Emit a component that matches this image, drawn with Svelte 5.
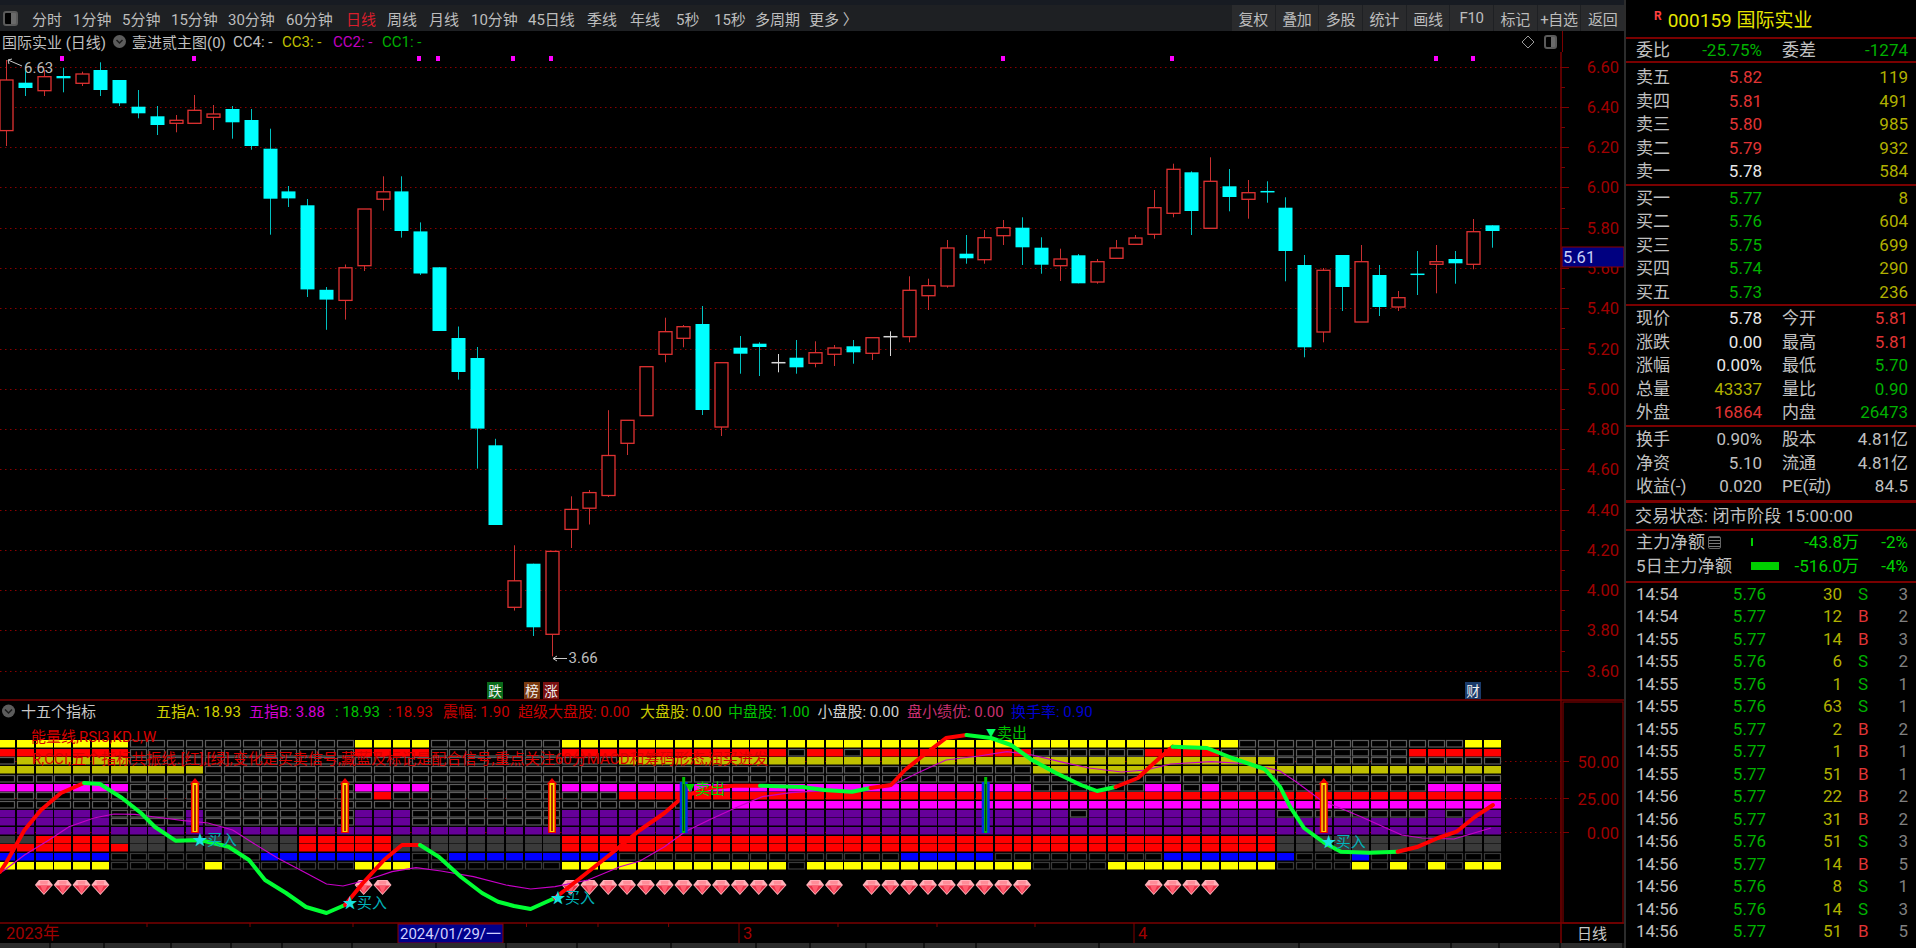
<script>
  const leftTabs = [['分时',41],['1分钟',49],['5分钟',49],['15分钟',57],['30分钟',58],['60分钟',60],['日线',41],['周线',42],['月线',42],['10分钟',57],['45日线',59],['季线',43],['年线',46],['5秒',38],['15秒',41],['多周期',54],['更多 〉',50]];
  const rightBtns = ['复权','叠加','多股','统计','画线','F10','标记','+自选','返回'];
  const cx = (i) => 6.3 + 18.81 * i;
  const priceY = (p) => 66.7 + (6.6 - p) * 201.33;
  const majors = Array.from({ length: 16 }, (_, k) => 6.6 - 0.2 * k);
  const minors = Array.from({ length: 15 }, (_, k) => 6.5 - 0.2 * k);

  // type, wick top, body top, body bottom, wick bottom (page pixels)
  const candles = [
    ['r',60,80,130.6,146],['c',68,82.7,88,96],['r',70,76.7,90.7,96],['c',67.7,76,78.3,92.3],['r',71.7,74,83.3,86],
    ['c',62.3,70,90,96],['c',80,80,103.3,106],['c',90,106.7,113.3,118.3],['c',106,116.3,125,135],['r',115,120.3,123.3,132.3],
    ['r',95,110.3,123.3,123.3],['r',105,114,117.3,130],['c',106,109,122.3,138.7],['c',109,120,146,149.7],['c',128.7,148.7,198.7,234.7],
    ['c',186,191.4,198.4,207],['c',199,205.3,289.4,297],['c',287,289.8,299.6,329.8],['r',264.5,267.8,300.4,319.6],['r',209,209,265.7,271],
    ['r',176.3,191.8,199.2,210.6],['c',176.3,191.4,231,237.6],['c',222.4,231.4,273.5,275],['c',267.3,267.3,331,331],['c',326.5,338,372,379.6],
    ['c',347,358,428.6,468.6],['c',438.8,445.3,525,525],['r',545.3,580.8,607.3,610.6],['c',563.7,563.7,627.3,636],['r',551.4,551.4,634.3,656.3],
    ['r',496.3,509.4,529.4,548],['r',490,492.6,508.2,524.5],['r',410.2,455.5,495.5,497],['r',420.3,420.3,443.3,455],['r',366.7,366.7,415.7,415.7],
    ['r',317.7,331.7,354.3,362.3],['r',325,326.7,338.3,347.3],['c',306,324,410,415],['r',362.7,362.7,427,436],['c',336,347.7,353.7,373.7],
    ['c',342.3,343.7,347,376],['w',354,362.7,362.7,372.3],['c',340,357.7,367.3,373.7],['r',341.3,352.7,363.3,367.3],['r',345,348,354.3,366],
    ['c',340,346.3,352.3,363.7],['r',337.7,337.7,353.3,360],['w',331.3,336.7,336.7,356],['r',276.3,290.3,336.7,342.3],['r',278.7,285.7,295.7,310],
    ['r',240,248,286,287.7],['c',235,253.7,258.3,263.7],['r',230,237.7,259.7,263.7],['r',220,227.7,235.7,245],['c',217.3,227.7,247.3,265],
    ['c',237.3,247.7,264.7,273.7],['r',248.7,259,265.7,281],['c',254,255.3,283.3,283.3],['r',259,261.7,282,283.7],['r',240,248,258.3,258.3],
    ['r',235,238,244.3,244.3],['r',190,207.7,234.3,238.7],['r',163.7,169.3,213.3,217.3],['c',171.3,172.3,211,235],['r',157.3,181.3,228.3,228.3],
    ['c',169,186.3,197,211.3],['r',180,192.7,199.3,218.7],['c',181.3,191.7,191.7,202.7],['c',197.3,207.7,251,281.3],['c',255,265,347.3,357.3],
    ['r',268,270.3,332,342.3],['c',255,255,287,311],['r',245,261.7,322,322],['c',265,275,307,316],['r',291,297.7,307,311],
    ['c',251,274.3,274.3,295],['r',245,261.7,264.3,293.3],['c',251,259,263.3,283.7],['r',219,231.7,264.3,269.3],['c',225.3,225.3,231,247.7]
  ];
  const candleColor = { r: '#e03232', c: '#00ffff', w: '#d8d8d8' };
  const wickColor = { r: '#c83030', c: '#00c0c0', w: '#d8d8d8' };
  const dots = [62, 194, 419, 438, 513, 551, 1003, 1172, 1436, 1473];

  const expand = (s) => {
    const set = new Set();
    s.split(',').forEach((part) => {
      const [a, b] = part.split('-').map(Number);
      for (let i = a; i <= (b ?? a); i++) set.add(i);
    });
    return set;
  };
  const rowsDef = [
    ['#ffff00','0-6,19-22,30-65,78-79','#5c5c5c'],
    ['#ff0000','0-6,19-22,30-41,43-44,46-54,61-64,75-79','#5c5c5c'],
    ['#c0c000','1-6,33-67','#5c5c5c'],
    ['#c0c000','0-10,55-79','#5c5c5c'],
    ['#000','300','#5c5c5c'],
    ['#ff00ff','0-6,19-22,30-54,61-62,64,76-79','#5c5c5c'],
    ['#ff0000','20,33-79','#5c5c5c'],
    ['#ff00ff','39-79','#5c5c5c'],
    ['#660099','0-5,10,19-21,30-56,58-67,76,78-79','#5c5c5c'],
    ['#660099','0-5,10,19-21,30-79','#5c5c5c'],
    ['#660099','0-79','#5c5c5c'],
    ['#ff0000','2-5,16-20,30-67','#3a3a3a'],
    ['#ff0000','0-6,16-20,30-67','#3a3a3a'],
    ['#0000ff','0-5,14-21,24-32,48-52,62-68,72','#3a3a3a'],
    ['#ffff00','0-5,11,19-21,30-41,43-54,59-67,72,74,76,78-79','#3a3a3a']
  ];
  const cells = [];
  rowsDef.forEach(([color, ranges, empty], r) => {
    const filled = expand(ranges);
    const y = Math.round(740 + 8.7 * r);
    for (let i = 0; i < 80; i++) {
      cells.push({ x: Math.round(cx(i) - 8.3), y, fill: filled.has(i) ? color : null, empty, solid: r === 11 || r === 12 });
    }
  });

  const toPts = (a) => a.map((p) => p.join(',')).join(' ');
  const redGreen = [
    ['#ff0000',[[0,872],[6,863],[24.5,830],[41,810],[61,793],[84,783]]],
    ['#00ff33',[[84,783],[100,784],[122,798],[141,813],[155,827],[175.5,840.7],[200,840],[228.6,846.7],[249,860],[265,880],[286,893],[306,907],[326.5,913],[345,905]]],
    ['#ff0000',[[345,905],[363,883],[384,860],[402,845],[420,845]]],
    ['#00ff33',[[420,845],[439,857],[461,877],[482,893],[498,901.7],[514,906],[530.6,909],[555,898]]],
    ['#ff0000',[[555,898],[612,853],[640,830],[664.5,813],[683,796.7],[709,788],[734,785.7],[760,785.7]]],
    ['#00ff33',[[760,785.7],[803,787],[824,790],[852,791.7],[870.6,788]]],
    ['#ff0000',[[870.6,788],[891,785],[905,770],[921.6,756.7],[946,738],[966.5,735]]],
    ['#00ff33',[[966.5,735],[991,738],[1011,745],[1032,760],[1056,773],[1081,785],[1097,791],[1115.5,787]]],
    ['#ff0000',[[1115.5,787],[1138,778],[1154,763],[1172.6,746.7]]],
    ['#00ff33',[[1172.6,746.7],[1207,748],[1232,758],[1264.5,769],[1280,786.7],[1290,806.7],[1304,828],[1324.6,843],[1341,851.7],[1369,852.7],[1397.6,851.7]]],
    ['#ff0000',[[1397.6,851.7],[1418,846.7],[1438,838],[1456.5,831.7],[1475,816.7],[1493,805]]]
  ];
  const thin = [[0,873],[6,869],[24.5,855],[49,840],[69,826.7],[94,818],[114,814],[135,814.3],[155,817],[184,820.7],[208,823],[232.6,830],[253,843],[277.5,858],[306,873],[326.5,884],[343,886],[367,880],[392,871.7],[416,867.7],[441,871],[473.5,876.7],[506,885],[530.6,889],[555,886.7],[588,880],[620,866.7],[640,861],[664.5,846.7],[685,831.7],[709,820],[738,806.7],[762.4,796.7],[791,792.7],[824,790.7],[852,790.7],[889,787],[917.6,773],[946,760],[979,756],[1007,751.7],[1032,755],[1060,761.7],[1089,768],[1121.6,772],[1146,770],[1170.6,764],[1211.4,761.7],[1252,764],[1280,771],[1296,781.7],[1320.6,800],[1361,816.7],[1401.7,835],[1422,838],[1454,839],[1491,828]];

  const gems = [...expand('2-5,19-20,30-41,43-44,46-54,61-64')];
  const buyArrows = [195, 345, 552, 1323.8];
  const sellBars = [683.7, 985.7];
  const buySignals = [[200,845],[350,908],[558,903],[1328.7,847]];
  const badges = [
    { x: 487, t: '跌', bg: '#0a6a1a' }, { x: 524, t: '榜', bg: '#7a3a10' },
    { x: 543, t: '涨', bg: '#7a1010' }, { x: 1465, t: '财', bg: '#1a3a6a' }
  ];
  const heads = [
    { x: 156, t: '五指A: 18.93', c: '#d0d000' }, { x: 249, t: '五指B: 3.88', c: '#d000d0' },
    { x: 335, t: ': 18.93', c: '#00c000' }, { x: 388, t: ': 18.93', c: '#c80000' },
    { x: 443, t: '震幅: 1.90', c: '#c80000' }, { x: 518, t: '超级大盘股: 0.00', c: '#c80000' },
    { x: 640, t: '大盘股: 0.00', c: '#c8c800' }, { x: 728, t: '中盘股: 1.00', c: '#00c000' },
    { x: 817.5, t: '小盘股: 0.00', c: '#d0d0d0' }, { x: 907, t: '盘小绩优: 0.00', c: '#c83070' },
    { x: 1011, t: '换手率: 0.90', c: '#0000d0' }
  ];
  const smallTicks = [147, 250, 353, 526.5, 598, 668.6, 838, 937, 1035];
  const tabEdges = [51, 105, 172, 232, 283, 353, 437, 507, 578, 672, 757, 811, 867, 925, 977, 1100, 1300, 1452, 1500, 1561, 1624];

  const sells = [['卖五','5.82','119','red'],['卖四','5.81','491','red'],['卖三','5.80','985','red'],['卖二','5.79','932','red'],['卖一','5.78','584','white']];
  const buys = [['买一','5.77','8'],['买二','5.76','604'],['买三','5.75','699'],['买四','5.74','290'],['买五','5.73','236']];
  const stats = [
    ['现价','5.78','white','今开','5.81','red'],['涨跌','0.00','white','最高','5.81','red'],
    ['涨幅','0.00%','white','最低','5.70','green'],['总量','43337','olive','量比','0.90','green'],
    ['外盘','16864','red','内盘','26473','green']
  ];
  const fin = [['换手','0.90%','股本','4.81亿'],['净资','5.10','流通','4.81亿'],['收益(-)','0.020','PE(动)','84.5']];
  const trades = [
    ['14:54','5.76','30','S','3'],['14:54','5.77','12','B','2'],['14:55','5.77','14','B','3'],['14:55','5.76','6','S','2'],
    ['14:55','5.76','1','S','1'],['14:55','5.76','63','S','1'],['14:55','5.77','2','B','2'],['14:55','5.77','1','B','1'],
    ['14:55','5.77','51','B','1'],['14:56','5.77','22','B','2'],['14:56','5.77','31','B','2'],['14:56','5.76','51','S','3'],
    ['14:56','5.77','14','B','5'],['14:56','5.76','8','S','1'],['14:56','5.76','14','S','3'],['14:56','5.77','51','B','5']
  ];
</script>

<div class="app">
  <div class="left">
    <div class="toolbar">
      <div class="tabs">
        <span class="panel-icon"></span>
        {#each leftTabs as [t, w]}
          <span class="tab" class:active={t === '日线'} style="width: {w}px">{t}</span>
        {/each}
      </div>
      <div class="btns">
        {#each rightBtns as b}<span class="btn">{b}</span>{/each}
      </div>
    </div>
    <div class="titlebar">
      <span class="stock">国际实业 (日线)</span>
      <span class="chev"><svg width="13" height="13" viewBox="0 0 13 13"><path d="M3.5 5 L6.5 8 L9.5 5" fill="none" stroke="#1a1a1a" stroke-width="1.5" /></svg></span>
      <span class="ind">壹进贰主图(0)</span>
      <span class="cc c4">CC4: -</span>
      <span class="cc y">CC3: -</span>
      <span class="cc m">CC2: -</span>
      <span class="cc g">CC1: -</span>
      <span class="spacer"></span>
      <svg class="diamond" width="14" height="14" viewBox="0 0 14 14"><path d="M7 1 L13 7 L7 13 L1 7 Z" fill="none" stroke="#9a9a9a" /></svg>
      <span class="panel-icon small"></span>
      <span class="axis-stub"></span>
    </div>

    <svg class="chart" viewBox="0 52 1624 891" width="1624" height="891">
      <defs>
        <g id="gem">
          <polygon points="4,0 14,0 18,5 9,15 0,5" fill="#ffb0b8" />
          <polygon points="1.5,5.5 16.5,5.5 9,13.5" fill="#e8344a" />
          <polygon points="5.5,5.5 12.5,5.5 9,14" fill="#ff5c70" />
          <polygon points="5,1 13,1 12.5,4.5 5.5,4.5" fill="#ff8c98" />
        </g>
      </defs>

      {#each majors as p}
        <line class="dotted" x1="0" x2="1561" y1={Math.round(priceY(p)) + 0.5} y2={Math.round(priceY(p)) + 0.5} />
        <line class="axis" x1="1561" x2="1569" y1={Math.round(priceY(p)) + 0.5} y2={Math.round(priceY(p)) + 0.5} />
        <text class="axis-label" x="1619" y={priceY(p) + 6} text-anchor="end">{p.toFixed(2)}</text>
      {/each}
      {#each minors as p}
        <line class="axis" x1="1561" x2="1565" y1={Math.round(priceY(p)) + 0.5} y2={Math.round(priceY(p)) + 0.5} />
      {/each}

      <rect x="1562" y="247" width="62" height="20" fill="#000080" stroke="#8b0000" />
      <text class="last" x="1563" y="262.5">5.61</text>

      {#each dots as x}<rect x={x - 2} y="56" width="4" height="5" fill="#ff00ff" />{/each}

      {#each candles as [t, wt, bt, bb, wb], i}
        {@const x = Math.round(cx(i)) + 0.5}
        <line x1={x} x2={x} y1={wt} y2={wb} stroke={wickColor[t]} stroke-width="1" />
        {#if bb - bt < 1}
          <line x1={x - 7} x2={x + 7} y1={bt} y2={bt} stroke={candleColor[t]} stroke-width="1.5" />
        {:else if t === 'c'}
          <rect x={x - 7} y={bt} width="14" height={bb - bt} fill="#00ffff" />
        {:else}
          <rect x={x - 6.5} y={bt} width="13" height={bb - bt} fill="#000" stroke={candleColor[t]} stroke-width="1.3" />
        {/if}
      {/each}

      <text class="note" x="24" y="73">6.63</text>
      <path class="arrow" d="M22 66 L8 60 M8 60 L12 59 M8 60 L9 64" />
      <text class="note" x="568.5" y="663">3.66</text>
      <path class="arrow" d="M567 658.5 L553 658.5 M553 658.5 L557 656 M553 658.5 L557 661" />

      {#each badges as b}
        <rect x={b.x} y="682" width="16" height="17" fill={b.bg} />
        <text class="badge" x={b.x + 8} y="696" text-anchor="middle">{b.t}</text>
      {/each}

      <!-- separators and axes -->
      <line class="sep" x1="0" x2="1624" y1="700" y2="700" />
      <line class="sep" x1="0" x2="1624" y1="923" y2="923" />
      <line class="sep" x1="1561" x2="1561" y1="52" y2="943" />
      <rect class="box" x="1563" y="702" width="60" height="221" />

      <circle cx="8.5" cy="711" r="6.5" fill="#5c5c5c" />
      <path d="M5 709.5 L8.5 713 L12 709.5" fill="none" stroke="#1a1a1a" stroke-width="1.5" />
      <text class="head" x="21" y="717" fill="#c8c8c8">十五个指标</text>
      {#each heads as h}<text class="head" x={h.x} y="716.5" fill={h.c}>{h.t}</text>{/each}

      {#each [[50, 761.5], [25, 798.5], [0, 832.5]] as [v, y]}
        <line class="dotted" x1="0" x2="1561" y1={y} y2={y} />
        <line class="axis" x1="1563" x2="1569" y1={y} y2={y} />
        <text class="axis-label" x="1619" y={y + 6} text-anchor="end">{v.toFixed(2)}</text>
      {/each}

      {#each cells as c}
        {#if c.fill}
          <rect x={c.x} y={c.y} width="17" height="7.5" fill={c.fill} />
        {:else if c.solid}
          <rect x={c.x} y={c.y} width="17" height="7.5" fill={c.empty} />
        {:else}
          <rect x={c.x + 0.5} y={c.y + 0.5} width="16" height="6.5" fill="#000" stroke={c.empty} stroke-width="1.2" />
        {/if}
      {/each}

      <text class="red-note" x="31" y="742">能量线,RSI3,KDJ,W</text>
      <text class="red-note" x="32" y="763.5" textLength="736" lengthAdjust="spacing">R,CCI,五个指标共振线.[红],[绿],变化是买卖信号,藏蓝及标记是配合信号,重点关注60分MACD和筹码形态,润买进发</text>

      {#each gems as i}<use href="#gem" x={cx(i) - 9} y="880" />{/each}

      <polyline points={toPts(thin)} fill="none" stroke="#c800c8" stroke-width="1.2" />
      {#each redGreen as [color, pts]}
        <polyline points={toPts(pts)} fill="none" stroke={color} stroke-width="4" stroke-linejoin="round" stroke-linecap="round" />
      {/each}

      {#each buyArrows as x}
        <polygon points="{x},778 {x + 5},784 {x + 4},784 {x + 4},833 {x - 4},833 {x - 4},784 {x - 5},784" fill="#f00000" />
        <rect x={x - 2.5} y="783" width="5" height="49" fill="#ffd800" />
        <rect x={x - 1} y="785" width="2" height="46" fill="#b02000" />
      {/each}
      {#each sellBars as x}
        <rect x={x - 4} y="782" width="8" height="51" fill="#0030e0" />
        <rect x={x - 1.5} y="777" width="3" height="56" fill="#00c000" />
        <rect x={x - 0.5} y="784" width="1" height="47" fill="#003000" />
      {/each}

      {#each buySignals as [x, y]}
        <text class="signal" {x} {y} text-anchor="middle" fill="#19e0e0">★</text>
        <text class="signal" x={x + 7} {y} fill="#00b0b8">买入</text>
      {/each}
      <text class="signal" x="695" y="794" fill="#00d000">卖出</text>
      <text class="mark" x="690" y="792" text-anchor="middle" fill="#00d000">▼</text>
      <text class="mark" x="991" y="736.5" text-anchor="middle" fill="#00ff66">▼</text>
      <text class="signal" x="997" y="738" fill="#00c000">卖出</text>

      <!-- date axis -->
      {#each smallTicks as x}<line class="axis" x1={x} x2={x} y1="923" y2="927" />{/each}
      <line class="axis" x1="739" x2="739" y1="923" y2="943" />
      <line class="axis" x1="1134" x2="1134" y1="923" y2="943" />
      <text class="axis-label" x="6" y="939">2023年</text>
      <rect x="398" y="924" width="105" height="19" fill="#00008b" stroke="#8b0000" />
      <text class="date" x="400" y="939">2024/01/29/一</text>
      <text class="axis-label" x="743" y="939">3</text>
      <text class="axis-label" x="1138" y="939">4</text>
      <text class="day" x="1577" y="939">日线</text>
    </svg>

    <div class="bottombar">
      {#each tabEdges as e, k}
        <span class="bt" style="width: {e - (k ? tabEdges[k - 1] : 0) - 2}px"></span>
      {/each}
    </div>
  </div>

  <aside class="side">
    <div class="head-row"><sup>R</sup><span>000159 国际实业</span></div>
    <div class="row2 weibi">
      <div class="cell"><span>委比</span><span class="green">-25.75%</span></div>
      <div class="cell"><span>委差</span><span class="green">-1274</span></div>
    </div>
    <div class="block sell">
      {#each sells as [n, p, v, c]}
        <div class="row1"><span>{n}</span><span class="price {c}">{p}</span><span class="olive">{v}</span></div>
      {/each}
    </div>
    <div class="block buy">
      {#each buys as [n, p, v]}
        <div class="row1"><span>{n}</span><span class="price green">{p}</span><span class="olive">{v}</span></div>
      {/each}
    </div>
    <div class="block stats">
      {#each stats as [a, av, ac, b, bv, bc]}
        <div class="row2">
          <div class="cell"><span>{a}</span><span class={ac}>{av}</span></div>
          <div class="cell"><span>{b}</span><span class={bc}>{bv}</span></div>
        </div>
      {/each}
    </div>
    <div class="block fin">
      {#each fin as [a, av, b, bv]}
        <div class="row2">
          <div class="cell"><span>{a}</span><span>{av}</span></div>
          <div class="cell"><span>{b}</span><span>{bv}</span></div>
        </div>
      {/each}
    </div>
    <div class="status">交易状态: 闭市阶段 15:00:00</div>
    <div class="block net">
      <div class="netrow">
        <span class="netlabel">主力净额<i class="list-icon"></i></span>
        <b class="bar tiny"></b><span class="netval">-43.8万</span><span class="netpct">-2%</span>
      </div>
      <div class="netrow">
        <span class="netlabel">5日主力净额</span>
        <b class="bar"></b><span class="netval">-516.0万</span><span class="netpct">-4%</span>
      </div>
    </div>
    <div class="trades">
      {#each trades as [t, p, v, s, n]}
        <div class="trade">
          <span>{t}</span><span class="r green">{p}</span><span class="r olive">{v}</span>
          <span class="bs {s === 'B' ? 'red' : 'green'}">{s}</span><span class="r gray">{n}</span>
        </div>
      {/each}
      <div class="trade">
        <span>15:00</span><span class="r white">5.78</span><span class="r mag">851</span>
        <span class="bs"></span><span class="r mag">34</span>
      </div>
    </div>
  </aside>
</div>

<style>
  :global(body) { margin: 0; background: #000; }
  .app {
    display: flex; width: 1916px; height: 948px; overflow: hidden; background: #000;
    font-family: Roboto, "Noto Sans CJK SC", sans-serif; color: #c0c0c0; font-size: 17px;
  }
  .left { width: 1624px; display: flex; flex-direction: column; flex: none; }
  .toolbar {
    height: 26px; border-top: 5px solid #171b22; background: #1e2023;
    display: flex; justify-content: space-between; font-size: 15px; color: #bdbdbd;
  }
  .tabs { display: flex; align-items: center; padding-left: 3px; }
  .tabs .panel-icon { margin-right: 14px; width: 11px; height: 11px; }
  .tab { flex: none; white-space: nowrap; }
  .active { color: #d81e2c; }
  .panel-icon {
    display: block; width: 13px; height: 13px; border: 2px solid #5a5a5a; border-radius: 3px;
    background: linear-gradient(90deg, #000 0 55%, #6a6a6a 55%); box-sizing: content-box; flex: none;
  }
  .panel-icon.small { width: 9px; height: 10px; margin-left: 9px; margin-right: 5px; }
  .btns { display: flex; gap: 1px; height: 26px; align-items: stretch; }
  .btn {
    width: 42.7px; display: flex; align-items: center; justify-content: center; background: #2a2b2d;
    white-space: nowrap; letter-spacing: -0.3px;
  }
  .titlebar { height: 21px; display: flex; align-items: center; font-size: 15px; padding-left: 2px; color: #c0c0c0; }
  .titlebar > span { white-space: nowrap; flex: none; }
  .stock { width: 111px; }
  .chev { width: 13px; height: 13px; border-radius: 50%; background: #5c5c5c; margin-right: 6px; display: block; }
  .chev svg { display: block; }
  .ind { width: 101px; }
  .cc { width: 49px; }
  .cc.y { color: #c0c000; width: 51px; }
  .cc.m { color: #c000c0; }
  .cc.g { color: #00b000; }
  .titlebar > .spacer { flex: 1; }
  .diamond { flex: none; }
  .titlebar > .axis-stub { width: 62px; height: 21px; border-left: 1.5px solid #7a0000; box-sizing: border-box; }
  .chart { display: block; flex: none; }
  .chart text { font-family: Roboto, "Noto Sans CJK SC", sans-serif; }
  .dotted { stroke: #8a0000; stroke-width: 1; stroke-dasharray: 1.5 3.5; }
  .axis { stroke: #800000; stroke-width: 1; }
  .sep { stroke: #7a0000; stroke-width: 1.5; }
  .box { fill: none; stroke: #7a0000; stroke-width: 1.2; }
  .axis-label { fill: #a00000; font-size: 16.5px; }
  .last { fill: #c8d0f8; font-size: 16.5px; }
  .note { fill: #bdbdbd; font-size: 15px; }
  .arrow { fill: none; stroke: #c8c8c8; stroke-width: 1; }
  .badge { fill: #f0f0f0; font-size: 13.5px; }
  .head { font-size: 15px; }
  .red-note { fill: #d80000; font-size: 15px; }
  .signal { font-size: 15px; }
  .mark { font-size: 10px; }
  .date { fill: #d0d0ff; font-size: 15px; }
  .day { fill: #c8c8c8; font-size: 15px; }
  .bottombar { height: 5px; display: flex; gap: 2px; background: #111; overflow: hidden; }
  .bt { background: #2c2c2c; flex: none; }

  .side { width: 290px; flex: none; border-left: 2px solid #2c2c2c; height: 948px; overflow: hidden; }
  .head-row {
    height: 37px; padding: 0 0 0 28px; display: flex; align-items: center;
    color: #e6e600; font-size: 19px; border-bottom: 2px solid #7a0000;
  }
  .head-row sup { color: #ff4040; font-size: 12px; font-weight: 700; margin-right: 6px; align-self: flex-start; margin-top: 9px; }
  .row2 { display: grid; grid-template-columns: 126px 126px; column-gap: 20px; padding-left: 10px; height: 23.5px; line-height: 23.5px; }
  .cell { display: flex; justify-content: space-between; white-space: nowrap; }
  .weibi { height: 22px; line-height: 22px; border-bottom: 2px solid #7a0000; }
  .block { border-bottom: 2px solid #7a0000; }
  .sell { padding-top: 3px; }
  .buy { padding-top: 1px; }
  .stats { padding-top: 1px; }
  .fin { padding-top: 1.5px; border-bottom-width: 3px; padding-bottom: 1px; }
  .row1 { display: grid; grid-template-columns: 60px 66px 1fr; padding: 0 8px 0 10px; height: 23.5px; line-height: 23.5px; }
  .price { text-align: right; }
  .row1 span:last-child { text-align: right; }
  .status { height: 26px; line-height: 27px; padding-left: 9px; border-bottom: 2px solid #7a0000; letter-spacing: 0.2px; }
  .net { padding-bottom: 3px; }
  .netrow { position: relative; height: 23.5px; line-height: 24px; padding-left: 10px; display: flex; align-items: center; }
  .netlabel { display: flex; align-items: center; width: 115px; flex: none; white-space: nowrap; letter-spacing: 0.3px; }
  .list-icon {
    width: 11px; height: 11px; margin-left: 3px; border: 1.5px solid #666; border-radius: 2px; flex: none;
    background: repeating-linear-gradient(180deg, #777 0 1px, #000 1px 3px);
  }
  .bar { width: 28px; height: 8px; background: #00d000; flex: none; }
  .bar.tiny { width: 1.5px; }
  .netval { color: #00d000; position: absolute; right: 57px; }
  .netpct { color: #00d000; position: absolute; right: 8px; }
  .trade {
    display: grid; grid-template-columns: 60px 70px 76px 1fr 30px; padding: 0 8px 0 10px;
    height: 22.5px; line-height: 22.5px;
  }
  .r { text-align: right; }
  .bs { padding-left: 16px; }
  .green { color: #00b000; }
  .red { color: #e03434; }
  .olive { color: #b0b000; }
  .white { color: #e8e8e8; }
  .gray { color: #808080; }
  .mag { color: #c800c8; }
</style>
